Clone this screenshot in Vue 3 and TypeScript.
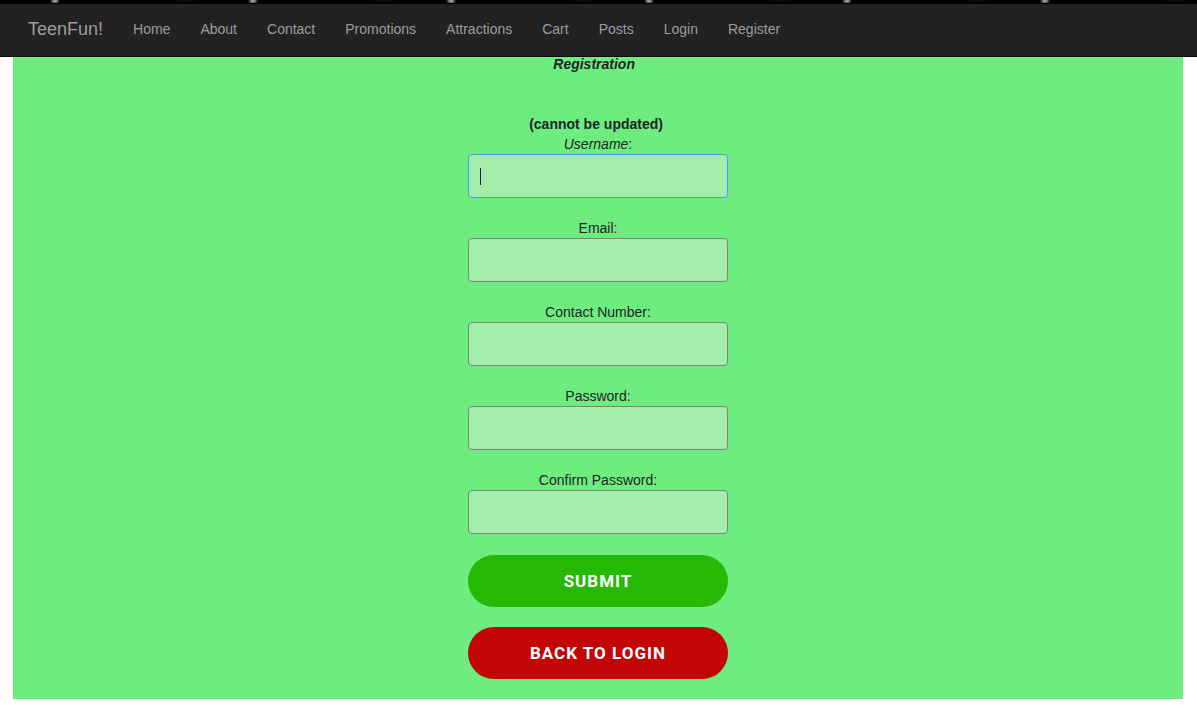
<script setup lang="ts">
import { nextTick, onMounted, reactive, ref } from 'vue'

interface Field {
  id: 'email' | 'contact' | 'password' | 'confirm'
  label: string
  type: string
}

const links: string[] = ['Home', 'About', 'Contact', 'Promotions', 'Attractions', 'Cart', 'Posts', 'Login', 'Register']

const fields: Field[] = [
  { id: 'email', label: 'Email:', type: 'email' },
  { id: 'contact', label: 'Contact Number:', type: 'tel' },
  { id: 'password', label: 'Password:', type: 'password' },
  { id: 'confirm', label: 'Confirm Password:', type: 'password' },
]

const form = reactive({ username: '', email: '', contact: '', password: '', confirm: '' })
const usernameInput = ref<HTMLInputElement | null>(null)
const usernameActive = ref(true)

onMounted(async () => {
  await nextTick()
  usernameInput.value?.focus()
})
</script>

<template>
  <div class="page">
    <header class="top">
      <div class="banner"></div>
      <nav class="navbar">
        <a class="brand" href="#">TeenFun!</a>
        <a v-for="link in links" :key="link" class="link" href="#">{{ link }}</a>
      </nav>
    </header>

    <main class="panel">
      <h1 class="title">Registration&nbsp;&nbsp;</h1>
      <form class="form" @submit.prevent>
        <div class="field">
          <strong>(cannot be updated)&nbsp;</strong>
          <label for="username"><em>Username</em>:</label>
          <div class="control">
            <input
              id="username"
              ref="usernameInput"
              v-model="form.username"
              class="input first"
              :class="{ active: usernameActive }"
              type="text"
              @focus="usernameActive = true"
              @blur="usernameActive = false"
            />
            <span v-if="usernameActive && !form.username" class="caret"></span>
          </div>
        </div>
        <div v-for="field in fields" :key="field.id" class="field">
          <label :for="field.id">{{ field.label }}</label>
          <input :id="field.id" v-model="form[field.id]" class="input" :type="field.type" />
        </div>
        <div class="actions">
          <button class="button submit" type="submit">SUBMIT</button>
          <button class="button back" type="button">BACK TO LOGIN</button>
        </div>
      </form>
    </main>
  </div>
</template>

<style>
body {
  margin: 0;
  background: #fff;
}
</style>

<style scoped>
.page {
  font-family: "Liberation Sans", Arial, sans-serif;
  font-size: 14px;
  line-height: 20px;
  color: #212529;
}

.top {
  position: sticky;
  top: 0;
  z-index: 1;
}

.banner {
  height: 4px;
  background-color: #020202;
  background-image:
    radial-gradient(ellipse 5px 3px at 55px 1px, #b4b4b4 0, #777 45%, transparent 100%),
    radial-gradient(ellipse 16px 2px at 186px 0, #151515 0, transparent 100%);
  background-size: 198px 3px;
  background-repeat: repeat-x;
}

.navbar {
  display: flex;
  align-items: flex-start;
  padding: 0 13px 2px;
  background: #222;
  border-bottom: 1px solid #080808;
}

.brand,
.link {
  padding: 15px;
  color: #9d9d9d;
  text-decoration: none;
}

.brand {
  font-size: 18px;
}

.panel {
  margin: 0 14px 0 13px;
  padding-bottom: 20px;
  background: #6eec7f;
  text-align: center;
}

.title {
  margin: 0;
  padding-bottom: 42px;
  font-size: 14px;
  line-height: 15px;
  font-weight: 700;
  font-style: italic;
}

.form {
  display: flex;
  flex-direction: column;
  gap: 20px;
  width: 260px;
  margin: 0 auto;
}

.field {
  display: flex;
  flex-direction: column;
}

.control {
  position: relative;
  display: flex;
}

.input {
  box-sizing: border-box;
  width: 100%;
  height: 44px;
  padding: 10px;
  border: 1px solid #808080;
  border-radius: 4px;
  outline: none;
  background: #a4eeac;
  color: inherit;
  font: inherit;
}

.first {
  caret-color: transparent;
}

.active {
  border-color: #4d9af5;
}

.caret {
  position: absolute;
  left: 12px;
  top: 14px;
  width: 1px;
  height: 17px;
  background: #212529;
  pointer-events: none;
}

.actions {
  display: flex;
  flex-direction: column;
  gap: 20px;
  padding-top: 1px;
}

.button {
  height: 52px;
  padding: 0;
  border: 0;
  border-radius: 26px;
  color: #fff;
  font-family: Roboto, sans-serif;
  font-size: 17px;
  font-weight: 700;
  letter-spacing: 1px;
}

.submit {
  background: #27b905;
}

.back {
  background: #c20505;
}
</style>
